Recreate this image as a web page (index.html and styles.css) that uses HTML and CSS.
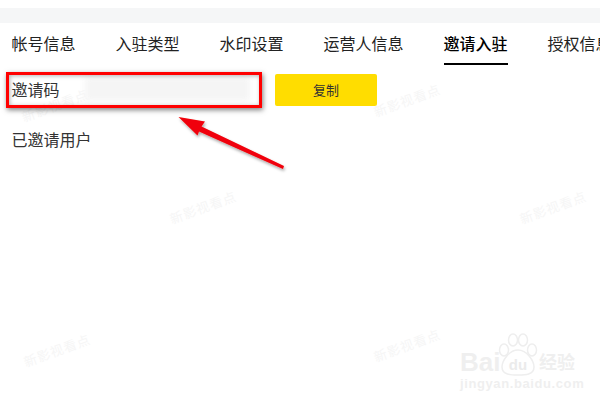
FILE: index.html
```html
<!DOCTYPE html>
<html lang="zh-CN">

<head>
    <meta charset="utf-8">
    <meta name="viewport" content="width=device-width, initial-scale=1.0">
    <title>邀请入驻</title>
    <link rel="stylesheet" href="styles.css">
</head>

<body>
    <div class="topbar"></div>

    <nav class="tabs">
        <a class="tab">帐号信息</a>
        <a class="tab">入驻类型</a>
        <a class="tab">水印设置</a>
        <a class="tab">运营人信息</a>
        <a class="tab valgt">邀请入驻</a>
        <a class="tab">授权信息</a>
    </nav>

    <main>
        <section class="invite">
            <div class="code">
                <span>邀请码</span>
                <span class="blurred"></span>
            </div>
            <button class="copy">复制</button>
        </section>
        <p class="invited">已邀请用户</p>
    </main>

    <!-- watermarks -->
    <span class="mark m1">新影视看点</span>
    <span class="mark m2">新影视看点</span>
    <span class="mark m3">新影视看点</span>
    <span class="mark m4">新影视看点</span>
    <span class="mark m5">新影视看点</span>
    <span class="mark m6">新影视看点</span>

    <!-- red annotation on top of the screenshot -->
    <div class="redbox"></div>
    <svg class="arrow" width="600" height="400" viewBox="0 0 600 400">
        <defs>
            <filter id="skygge" x="-20%" y="-20%" width="140%" height="140%">
                <feDropShadow dx="1" dy="2" stdDeviation="1.5" flood-color="#000" flood-opacity="0.35" />
            </filter>
        </defs>
        <path d="M178.500 117 L205 121.500 L201.500 126.500 L284 166 L283 169 L199 131.500 L197.500 135.500 Z" fill="#f00008" filter="url(#skygge)" />
    </svg>

    <div class="baidu">
        <svg class="paw" width="44" height="46" viewBox="0 0 44 46">
            <g fill="#fff" stroke="#eeeeee" stroke-width="1.500">
                <ellipse cx="8" cy="17" rx="4.500" ry="6" />
                <ellipse cx="17" cy="7" rx="4.500" ry="6" />
                <ellipse cx="27" cy="7" rx="4.500" ry="6" />
                <ellipse cx="36" cy="17" rx="4.500" ry="6" />
                <path d="M22 17 C31 17 38 28 38 34 C38 42 29 42 22 42 C15 42 6 42 6 34 C6 28 13 17 22 17 Z" />
            </g>
            <text x="22" y="37" text-anchor="middle" class="du">du</text>
        </svg>
        <span class="bai">Bai</span>
        <span class="jing">经验</span>
        <span class="url">jingyan.baidu.com</span>
    </div>
</body>

</html>
```

FILE: styles.css
```css
*,
body * {
    box-sizing: border-box;
}

body {
    margin: 0;
    padding: 8px 0 0;
    width: 600px;
    height: 400px;
    overflow: hidden;
    position: relative;
    background-color: #fff;
    font-family: "Noto Sans CJK SC", "Liberation Sans", sans-serif;
    color: #333;
}

.topbar {
    height: 15px;
    background-color: #f5f6f7;
}

.tabs {
    display: flex;
    gap: 40px;
    height: 42px;
    padding-left: 11.500px;
    white-space: nowrap;
}

.tab {
    height: 42px;
    padding-top: 9px;
    font-size: 16px;
    line-height: 22px;
    color: #222;
}

.valgt {
    border-bottom: 2px solid #000;
    color: #000;
    font-weight: 500;
}

main {
    padding: 9px 11.500px 0;
}

.invite {
    display: flex;
    align-items: center;
    height: 32px;
}

.code {
    display: flex;
    align-items: center;
    width: 263.500px;
    font-size: 16px;
    line-height: 22px;
    padding-bottom: 2px;
}

.blurred {
    width: 165px;
    height: 24px;
    margin-left: 25px;
    background-color: #f5f5f5;
    filter: blur(3px);
}

.copy {
    width: 102px;
    height: 32px;
    border: 0;
    border-radius: 2px;
    padding: 0 0 1px;
    background-color: #ffdd00;
    font-family: inherit;
    font-size: 13px;
    color: #333;
}

.invited {
    margin: 22px 0 0;
    font-size: 16px;
    line-height: 22px;
}

.mark {
    position: absolute;
    transform: translate(-50%, -50%) rotate(-20deg);
    font-size: 13px;
    letter-spacing: 1px;
    white-space: nowrap;
    color: #f6f6f6;
}

.m1 { left: 55px; top: 105px; }
.m2 { left: 407px; top: 100px; }
.m3 { left: 203px; top: 207px; }
.m4 { left: 553px; top: 207px; }
.m5 { left: 57px; top: 350px; }
.m6 { left: 407px; top: 345px; }

.redbox {
    position: absolute;
    left: 6px;
    top: 72px;
    width: 256px;
    height: 36px;
    border: 3px solid #f00;
    box-shadow: 1px 2px 5px rgba(0, 0, 0, 0.5), inset 1px 1px 4px rgba(0, 0, 0, 0.3);
}

.arrow {
    position: absolute;
    left: 0;
    top: 0;
}

.baidu {
    position: absolute;
    left: 458px;
    top: 333px;
    width: 142px;
    height: 60px;
    color: #efefef;
}

.paw {
    position: absolute;
    left: 38px;
    top: 0;
}

.du {
    font-family: "Liberation Sans", sans-serif;
    font-size: 15px;
    font-weight: 700;
    fill: #ebebeb;
}

.bai {
    position: absolute;
    left: 2px;
    top: 14px;
    font-family: "Liberation Sans", sans-serif;
    font-size: 26px;
    line-height: 30px;
    font-weight: 700;
}

.jing {
    position: absolute;
    left: 81px;
    top: 15px;
    font-size: 18px;
    line-height: 26px;
    font-weight: 700;
}

.url {
    position: absolute;
    left: 2px;
    top: 43px;
    font-family: "Liberation Sans", sans-serif;
    font-size: 13px;
    line-height: 16px;
    letter-spacing: 0.6px;
    font-weight: 700;
}
```
